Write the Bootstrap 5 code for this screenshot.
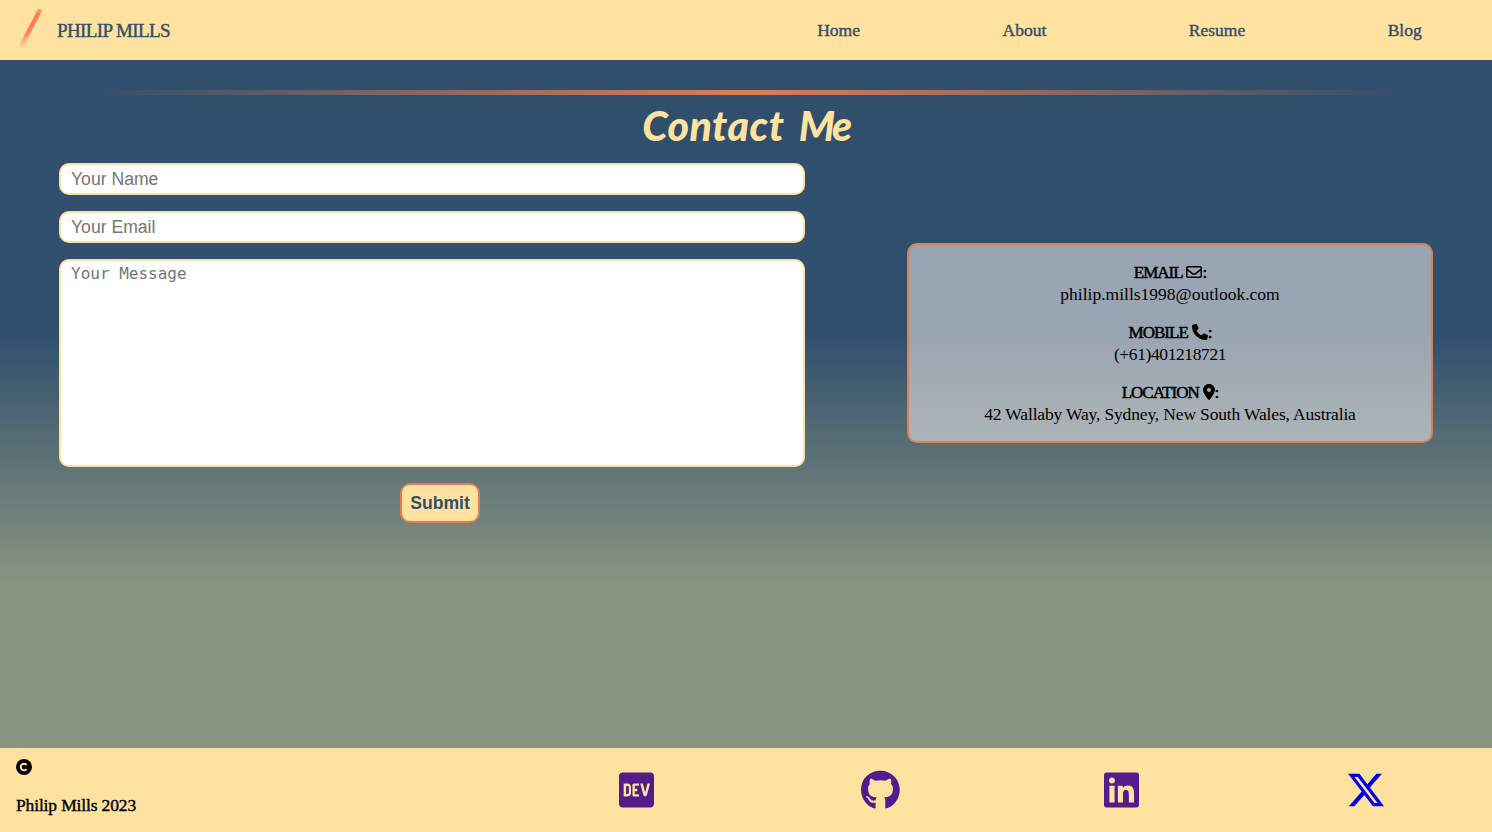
<!DOCTYPE html>
<html lang="en">
<head>
<meta charset="utf-8">
<meta name="viewport" content="width=device-width, initial-scale=1">
<title>Philip Mills - Contact</title>
<link href="https://cdn.jsdelivr.net/npm/bootstrap@5.3.0/dist/css/bootstrap.min.css" rel="stylesheet">
<style>
:root{--cream:#ffe1a0;--navy:#304f6d;--coral:#e07d54;--sage:#899481}
body{font-family:"Liberation Serif",serif;font-size:17.5px;line-height:22px;color:#000;
  background:linear-gradient(180deg,var(--navy) 40%,var(--sage) 70%);overflow:hidden}
.site-head{height:60px;background:var(--cream);padding:0 70.3px 0 16px}
.site-head a{color:var(--navy);-webkit-text-stroke:.4px var(--navy)}
.brand-name{font-size:19px;letter-spacing:-.6px;margin-left:13px;padding-top:2px}
.menu{gap:142.5px}
.rule{width:88%;height:5px;margin:30px auto 0;background:linear-gradient(90deg,transparent,var(--coral),transparent)}
.page-title{height:68px;line-height:62px;margin:0;color:var(--cream);font-family:Lato,sans-serif;font-style:italic;font-weight:900;font-size:41px;letter-spacing:.55px;word-spacing:5px}
.page-title span{letter-spacing:-2.4px}
.contact{padding:0 59px}
.contact-form{width:746px}
.field{display:block;width:100%;border:2px solid var(--cream);border-radius:10px;background:#fff;padding:0 10px;font:17.6px "Liberation Sans",sans-serif;height:32px;resize:none}
.field::placeholder{color:#757575;opacity:1}
textarea.field{height:208px;padding-top:2px;font:16px/21px "DejaVu Sans Mono",monospace}
.send{width:80px;height:40px;padding:0;margin-left:16px;border:2px solid var(--coral);border-radius:10px;background:var(--cream);color:var(--navy);font:bold 17.6px "Liberation Sans",sans-serif}
.info{width:526px;height:200px;margin-top:80px;border:2px solid var(--coral);border-radius:10px;background:rgba(255,250,246,.51);padding:15.500px 0}
.info p{margin-bottom:16px}
.tag{font-size:17px;line-height:1;letter-spacing:-1px;-webkit-text-stroke:.5px #000}
.info svg{height:16px;vertical-align:-2px;margin-left:-.5px}
.phone{letter-spacing:-.4px}
.street{letter-spacing:-.16px}
.site-foot{height:84px;background:var(--cream);padding:11px 106px 0 16px}
.owner{letter-spacing:-.15px;-webkit-text-stroke:.4px #000;margin-top:19px}
.social{gap:205.6px;padding-top:11px;color:#551a8b}
.social svg{height:40px;display:block}
.social .hub{margin:0 -2px 0 2px}
.social .linked{margin-right:1.700px}
</style>
</head>
<body class="vh-100 d-flex flex-column">
<header class="site-head d-flex align-items-center justify-content-between">
  <a href="#" class="d-flex align-items-center text-decoration-none">
    <svg width="28" height="46" viewBox="0 0 28 46"><defs><linearGradient id="fade" gradientUnits="userSpaceOnUse" x1="24" y1="3" x2="3" y2="42"><stop offset="0" stop-color="#ff7f50" stop-opacity=".7"/><stop offset=".1" stop-color="#ff7f50"/><stop offset=".55" stop-color="#ff7f50"/><stop offset="1" stop-color="#ff7f50" stop-opacity="0"/></linearGradient></defs><path d="M23.500 4 3.500 42" stroke="url(#fade)" stroke-width="4.400" stroke-linecap="round"/></svg>
    <span class="brand-name">PHILIP MILLS</span>
  </a>
  <nav class="menu d-flex">
    <a class="text-decoration-none" href="#">Home</a><a class="text-decoration-none" href="#">About</a><a class="text-decoration-none" href="#">Resume</a><a class="text-decoration-none" href="#">Blog</a>
  </nav>
</header>
<main class="flex-grow-1">
  <div class="rule"></div>
  <h1 class="page-title text-center">Contact <span>Me</span></h1>
  <div class="contact d-flex justify-content-between align-items-start">
    <form class="contact-form d-flex flex-column align-items-center gap-3">
      <input class="field" type="text" placeholder="Your Name">
      <input class="field" type="email" placeholder="Your Email">
      <textarea class="field" placeholder="Your Message"></textarea>
      <button class="send" type="button">Submit</button>
    </form>
    <section class="info text-center">
      <p><span class="tag">EMAIL</span> <svg viewBox="0 0 512 512"><path d="M64 112c-8.800 0-16 7.200-16 16v22.100L220.500 291.700c20.700 17 50.400 17 71.100 0L464 150.100V128c0-8.800-7.200-16-16-16H64zM48 212.200V384c0 8.800 7.200 16 16 16H448c8.800 0 16-7.200 16-16V212.200L322 328.800c-38.400 31.500-93.700 31.500-132 0L48 212.200zM0 128C0 92.700 28.700 64 64 64H448c35.300 0 64 28.700 64 64V384c0 35.300-28.700 64-64 64H64c-35.300 0-64-28.700-64-64V128z"/></svg><span class="tag">:</span><br>philip.mills1998@outlook.com</p>
      <p><span class="tag">MOBILE</span> <svg viewBox="0 0 512 512"><path d="M164.900 24.600c-7.700-18.600-28-28.500-47.400-23.200l-88 24C12.100 30.200 0 46 0 64C0 311.400 200.600 512 448 512c18 0 33.800-12.100 38.600-29.500l24-88c5.300-19.400-4.600-39.700-23.200-47.400l-96-40c-16.300-6.800-35.200-2.100-46.300 11.600L304.700 368C234.300 334.700 177.300 277.700 144 207.300L193.300 167c13.700-11.200 18.400-30 11.600-46.300l-40-96z"/></svg><span class="tag">:</span><br><span class="phone">(+61)401218721</span></p>
      <p><span class="tag">LOCATION</span> <svg viewBox="0 0 384 512"><path d="M215.700 499.200C267 435 384 279.400 384 192C384 86 298 0 192 0S0 86 0 192c0 87.400 117 243 168.300 307.200c12.300 15.300 35.100 15.300 47.400 0zM192 128a64 64 0 1 1 0 128 64 64 0 1 1 0-128z"/></svg><span class="tag">:</span><br><span class="street">42 Wallaby Way, Sydney, New South Wales, Australia</span></p>
    </section>
  </div>
</main>
<footer class="site-foot d-flex justify-content-between">
  <div>
    <svg class="d-block" width="16" height="16" viewBox="0 0 16 16"><circle cx="8" cy="8" r="8"/><path d="M10.700 6A3.300 3.300 0 1 0 10.700 10" fill="none" stroke="#ffe1a0" stroke-width="2"/></svg>
    <div class="owner">Philip Mills 2023</div>
  </div>
  <div class="social d-flex align-items-start">
    <svg fill="currentColor" viewBox="0 0 448 512"><path d="M120.120 208.290c-3.880-2.900-7.770-4.350-11.650-4.350H91.030v104.470h17.450c3.880 0 7.770-1.450 11.650-4.350 3.880-2.900 5.820-7.250 5.820-13.060v-69.650c-.01-5.800-1.960-10.160-5.830-13.060zM404.100 32H43.900C19.700 32 .06 51.590 0 75.800v360.400C.06 460.410 19.700 480 43.900 480h360.200c24.210 0 43.840-19.590 43.900-43.800V75.800c-.06-24.210-19.700-43.800-43.900-43.800zM154.200 291.190c0 18.810-11.610 47.310-48.360 47.250h-46.400V172.980h47.380c35.440 0 47.360 28.460 47.370 47.280l.01 70.930zm100.680-88.660H201.600v38.420h32.570v29.570H201.600v38.410h53.290v29.570h-62.180c-11.160.29-20.440-8.530-20.720-19.690V193.700c-.27-11.150 8.560-20.410 19.710-20.690h63.190l-.01 29.520zm103.640 115.290c-13.200 30.750-36.850 24.630-47.440 0l-38.530-144.800h32.570l29.710 113.720 29.570-113.720h32.580l-38.460 144.800z"/></svg>
    <svg class="hub" fill="currentColor" viewBox="0 0 496 512"><path d="M165.900 397.400c0 2-2.300 3.600-5.200 3.600-3.300.3-5.600-1.300-5.600-3.600 0-2 2.300-3.600 5.200-3.600 3-.3 5.600 1.300 5.600 3.600zm-31.100-4.500c-.7 2 1.300 4.300 4.300 4.900 2.600 1 5.600 0 6.200-2s-1.300-4.300-4.300-5.200c-2.600-.7-5.500.3-6.200 2.300zm44.200-1.700c-2.900.7-4.900 2.600-4.600 4.900.3 2 2.900 3.300 5.900 2.600 2.900-.7 4.900-2.600 4.600-4.600-.3-1.900-3-3.200-5.900-2.900zM244.800 8C106.100 8 0 113.300 0 252c0 110.900 69.800 205.800 169.500 239.200 12.800 2.300 17.300-5.600 17.300-12.100 0-6.200-.3-40.400-.3-61.400 0 0-70 15-84.700-29.800 0 0-11.400-29.100-27.800-36.600 0 0-22.900-15.700 1.600-15.400 0 0 24.900 2 38.600 25.800 21.900 38.600 58.600 27.500 72.900 20.900 2.300-16 8.800-27.100 16-33.700-55.900-6.200-112.300-14.300-112.300-110.500 0-27.500 7.600-41.300 23.600-58.900-2.600-6.500-11.100-33.300 2.600-67.900 20.900-6.500 69 27 69 27 20-5.600 41.500-8.500 62.800-8.500s42.800 2.900 62.800 8.500c0 0 48.100-33.600 69-27 13.700 34.700 5.200 61.400 2.600 67.900 16 17.700 25.800 31.500 25.800 58.900 0 96.500-58.900 104.200-114.800 110.500 9.200 7.900 17 22.900 17 46.400 0 33.700-.3 75.400-.3 83.600 0 6.500 4.600 14.400 17.300 12.100C428.200 457.800 496 362.900 496 252 496 113.300 383.500 8 244.800 8z"/></svg>
    <svg class="linked" fill="currentColor" viewBox="0 0 448 512"><path d="M416 32H31.900C14.300 32 0 46.500 0 64.300v383.400C0 465.500 14.300 480 31.900 480H416c17.600 0 32-14.500 32-32.300V64.300c0-17.800-14.400-32.300-32-32.300zM135.400 416H69V202.200h66.500V416zm-33.200-243c-21.300 0-38.500-17.300-38.500-38.500S80.900 96 102.200 96c21.200 0 38.500 17.300 38.500 38.500 0 21.300-17.200 38.500-38.500 38.500zm282.100 243h-66.400V312c0-24.800-.5-56.700-34.500-56.700-34.600 0-39.900 27-39.900 54.900V416h-66.400V202.200h63.700v29.200h.9c8.900-16.800 30.600-34.500 62.900-34.500 67.200 0 79.700 44.300 79.700 101.900V416z"/></svg>
    <svg fill="#0000ee" viewBox="0 0 512 512"><path d="M389.200 48h70.600L305.600 224.200 487 464H345L233.700 318.600 106.500 464H35.800L200.700 275.500 26.800 48H172.400L272.900 180.900 389.200 48zM364.400 421.800h39.100L151.100 88h-42L364.400 421.800z"/></svg>
  </div>
</footer>
<script src="https://cdn.jsdelivr.net/npm/bootstrap@5.3.0/dist/js/bootstrap.bundle.min.js"></script>
</body>
</html>
